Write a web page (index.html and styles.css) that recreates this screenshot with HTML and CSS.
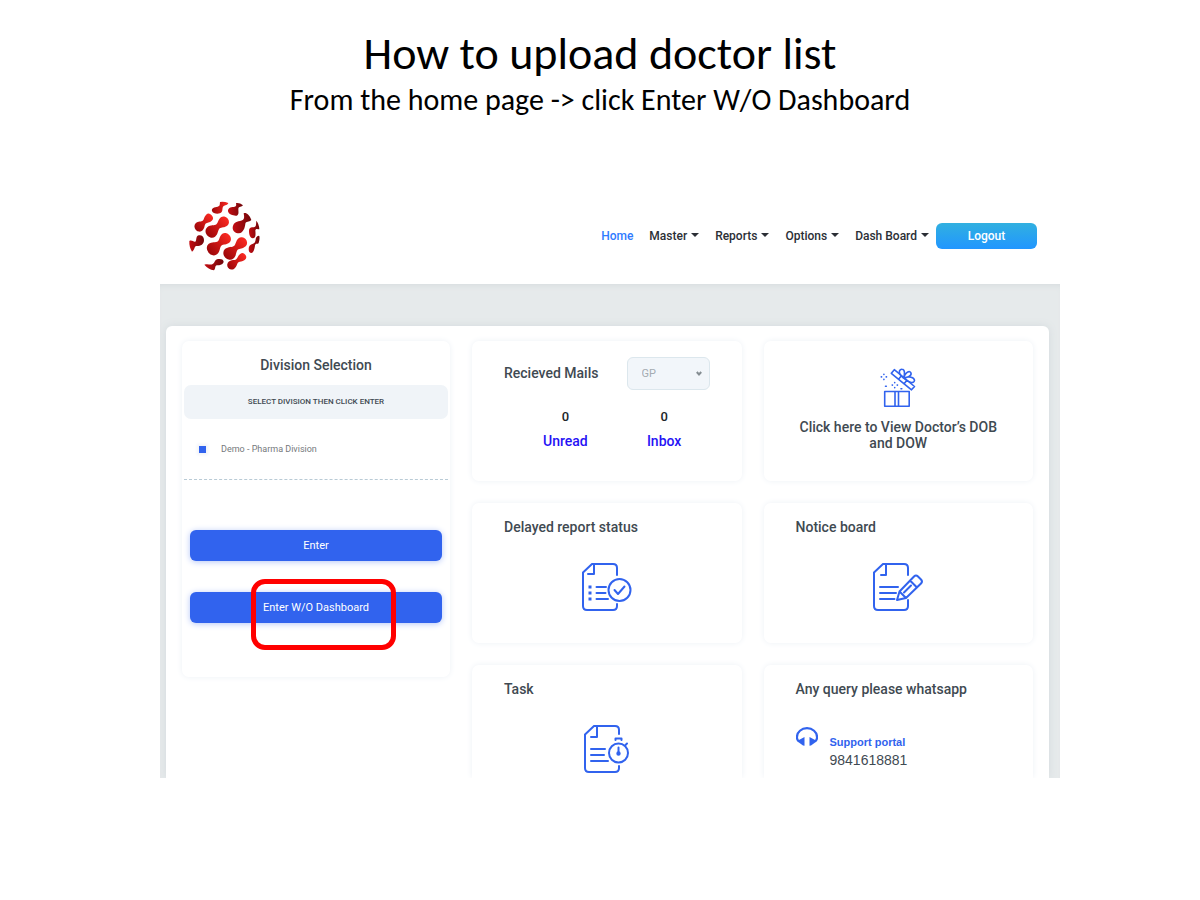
FILE: index.html
```html
<!DOCTYPE html>
<html lang="en">
<head>
<meta charset="utf-8">
<title>How to upload doctor list</title>
<link rel="stylesheet" href="styles.css">
</head>
<body>
<header class="slide-head">
  <h1>How to upload doctor list</h1>
  <p>From the home page -&gt; click Enter W/O Dashboard</p>
</header>
<div class="app">
  <header class="topbar">
    <svg class="logo" viewBox="24 30 222 216" aria-label="Logo" role="img">
      <defs>
        <linearGradient id="bright"><stop offset="0" stop-color="#9c0609"/><stop offset="1" stop-color="#fb2a22"/></linearGradient>
        <linearGradient id="deep"><stop offset="0" stop-color="#c40d12"/><stop offset="1" stop-color="#6f060a"/></linearGradient>
        <path id="bone" d="M-30-19C-14-19-8-8 2-8C10-8 16-16 30-16A16 16 0 0 1 30 16C16 16 10 8 2 8C-8 8-14 19-30 19A19 19 0 0 1-30-19Z"/>
      </defs>
      <g fill="url(#bright)">
        <use href="#bone" transform="translate(113 110) rotate(-39) scale(.84 .98)"/>
        <use href="#bone" transform="translate(118 161) rotate(-40) scale(.86 1.05)"/>
        <use href="#bone" transform="translate(167 174) rotate(-42) scale(.87 1)"/>
        <use href="#bone" transform="translate(72 97) rotate(-43) scale(.68 .78)"/>
        <use href="#bone" transform="translate(171 213) rotate(-37) scale(.68 .7)"/>
        <path d="M96 63C94 54 103 51 113 50C121 48 119 42 120 36Q132 34 145 39C143 46 135 45 130 49C126 53 129 60 125 66C119 74 99 72 96 63Z"/>
      </g>
      <g fill="url(#deep)">
        <path d="M158 113C159 100 167 95 180 93C195 91 193 82 191 70C198 67 208 73 214 90C207 97 198 93 196 101C195 113 190 128 177 130C166 130 158 123 158 113Z"/>
        <path d="M144 64C143 55 151 51 161 51C170 50 169 45 168 39Q179 37 189 46C185 52 177 49 175 56C175 66 178 73 170 77C161 78 146 74 144 64Z"/>
        <path d="M207 122C208 113 213 112 221 112C229 111 228 103 229 92Q237 101 238 118C233 118 228 115 226 121C227 132 228 145 218 145C210 143 207 134 207 122Z"/>
        <path d="M206 177C206 168 211 163 219 161C227 158 226 152 228 143Q233 136 238 138Q240 147 236 159C233 164 228 158 225 166C224 176 221 190 213 189C208 188 206 184 206 177Z"/>
        <path d="M28 153Q27 171 36 185C44 181 42 171 48 168C60 169 72 164 72 150C72 139 64 134 56 136C46 140 51 151 46 155C41 157 36 149 28 153Z"/>
        <path d="M73 224Q85 238 102 241C108 235 103 230 110 226C120 225 129 224 131 215C130 207 120 206 111 208C103 211 105 219 98 222C91 226 84 220 73 224Z"/>
      </g>
    </svg>
    <nav class="nav">
      <a class="active" href="#">Home</a>
      <a class="more" href="#">Master</a>
      <a class="more" href="#">Reports</a>
      <a class="more" href="#">Options</a>
      <a class="more" href="#">Dash Board</a>
    </nav>
    <button class="logout" type="button">Logout</button>
  </header>
  <main class="backdrop">
    <div class="panel">
      <form class="card division">
        <h2>Division Selection</h2>
        <p class="hint">SELECT DIVISION THEN CLICK ENTER</p>
        <label class="option"><input type="radio" name="division" checked>Demo - Pharma Division</label>
        <button class="primary" type="button">Enter</button>
        <div class="marked">
          <button class="primary" type="button">Enter W/O Dashboard</button>
          <span class="marker"></span>
        </div>
      </form>
      <div class="tiles">
        <section class="card mails">
          <div class="mail-head">
            <h2><label for="group">Recieved Mails</label></h2>
            <div class="picker">
              <select id="group"><option>GP</option></select>
              <svg viewBox="0 0 6 5"><path d="M.8 1L3 3.4L5.2 1"/></svg>
            </div>
          </div>
          <div class="counts">
            <div><span>0</span><a href="#">Unread</a></div>
            <div><span>0</span><a href="#">Inbox</a></div>
          </div>
        </section>
        <section class="card gift">
          <svg class="line-icon gift-icon" viewBox="0 0 36 40">
            <path d="M4.700 23.500h24.500v14.700h-24.500zM15 23.500v14.700M18.500 23.500v14.700"/>
            <path d="M14.300 1.700L34.500 18.500L31.500 21.800L11.300 5.300ZM21.500 7.700L18.500 11.200M27 12.200L24 15.800"/>
            <path d="M23.500 10C17 5 19.500 1 22 1.200C25 1.300 25 6 23.500 10C26 3 30 2.500 31 5C32 8 27 9.500 23.500 10C29 8 34.500 9 34.500 12.500C34 16 28 14.500 23.500 10"/>
            <path d="M3.900 6.200v.3M3.900 11.300v.3M1.300 8.900h.3M6.200 8.900h.3M14.700 14.500v.3M14.700 19.500v.3M12.200 17.100h.3M17.200 17.100h.3"/>
            <path d="M5.500 18.200h.8M21 20.800h.8"/>
          </svg>
          <h2>Click here to View Doctor’s DOB and DOW</h2>
        </section>
        <section class="card">
          <h2>Delayed report status</h2>
          <svg class="line-icon doc" viewBox="0 0 50 48">
            <path d="M10 1H31Q35 1 35 5V12M35 41V43Q35 47 31 47H5Q1 47 1 43V9.500L10 1M12 1V11H6"/>
            <path d="M14.500 24H24M14.500 30H23.500M14.500 36H26"/>
            <path stroke-linecap="butt" stroke-width="3" d="M6.500 24h3M6.500 30h3M6.500 36h3"/>
            <circle cx="37.500" cy="27" r="11"/><path d="M32.500 27L36 31L42.500 23.500"/>
          </svg>
        </section>
        <section class="card">
          <h2>Notice board</h2>
          <svg class="line-icon doc" viewBox="0 0 50 48">
            <path d="M10 1H31Q35 1 35 5V12M35 37V43Q35 47 31 47H5Q1 47 1 43V9.500L10 1M13 1V12H8"/>
            <path d="M7 24H25M7 30H23M7 36H21.500"/>
            <path d="M24 37L26.500 28.500L41 13.500Q43 11.500 45 13.500L48 16.500Q50 18.500 48 20.500L33 35ZM26.500 28.500L33 35M37 17.500L44 24.500M31 29.500L38 22.500"/>
          </svg>
        </section>
        <section class="card cut">
          <h2>Task</h2>
          <svg class="line-icon doc" viewBox="0 0 50 48">
            <path d="M12 1H33Q37 1 37 5V9M37 41V43Q37 47 33 47H7Q3 47 3 43V9.500L12 1M15 1V12H9"/>
            <path d="M9 24H23M9 30H22M9 36H26"/>
            <circle cx="36.500" cy="28" r="9.500"/>
            <path d="M33.500 15V13.500H39.500V15M43.500 20L45 18.500M36.500 22.500V28"/>
            <circle class="solid" cx="36.500" cy="28.500" r="1.200"/>
          </svg>
        </section>
        <section class="card cut">
          <h2>Any query please whatsapp</h2>
          <div class="support">
            <svg viewBox="0 0 22 20"><path class="band" d="M3 14.500C.5 12.500 1 10.500 1 10C1 5 5.500 1.200 11 1.200S21 5 21 10C21 10.500 21.500 12.500 19 14.500"/><path class="ear" d="M8.500 10V18.800L7 18.500L1.500 14.500L2 13.500ZM13.500 10V18.800L15 18.500L20.500 14.500L20 13.500Z"/></svg>
            <div><a href="#">Support portal</a><span>9841618881</span></div>
          </div>
        </section>
      </div>
    </div>
  </main>
</div>
</body>
</html>
```
FILE: styles.css
```css
* { box-sizing: border-box; }
body { margin: 0; background: #fff; font-family: Roboto, sans-serif; color: #212529; }
h1, h2, p { margin: 0; }
a { text-decoration: none; }

.slide-head { padding-top: 27px; text-align: center; font-family: Carlito, Calibri, "Open Sans", sans-serif; color: #000; }
.slide-head h1 { font-size: 46px; line-height: 53px; font-weight: 400; }
.slide-head p { font-size: 30px; line-height: 40px; }

.app { margin: 68px 140px 0 160px; overflow: hidden; }
.topbar { display: flex; align-items: center; height: 96px; padding: 0 23px 0 28px; }
.logo { width: 74px; height: 72px; }
.nav { display: flex; gap: 16px; margin-left: auto; font-size: 12px; line-height: 16px; font-weight: 500; }
.nav a { color: #2b2f36; white-space: nowrap; }
.nav .active { color: #2f7bff; }
.more::after { content: ""; display: inline-block; margin-left: 4px; vertical-align: 3px; border: 4px solid transparent; border-top-color: currentColor; border-bottom: 0; }
.logout { width: 101px; height: 26px; margin-left: 7px; border: 0; border-radius: 6px; background: linear-gradient(#31b0e0, #2196ff); color: #fff; font: 500 12px Roboto, sans-serif; }

.backdrop { padding: 42px 11px 0 6px; background: #e6eaeb; box-shadow: inset 0 5px 6px -4px #d5dadd; }
.panel { display: grid; grid-template-columns: minmax(0, 268fr) minmax(0, 561fr); column-gap: 22px; align-items: start; padding: 15px 16px 0; border-radius: 6px 6px 0 0; background: #fff; box-shadow: 0 0 8px #d4dade; }
.tiles { display: grid; grid-template-columns: 1fr 1fr; gap: 22px; }
.card { min-height: 140px; padding: 16px 32px 0; border-radius: 7px; background: #fff; box-shadow: 0 0 6px #edf1f6; }
.card h2 { color: #3f4a52; font-size: 14px; line-height: 16px; font-weight: 500; }
.cut { min-height: 113px; border-radius: 7px 7px 0 0; padding-bottom: 5px; }

.division { padding: 16px 2px 54px; }
.division h2 { text-align: center; }
.hint { margin-top: 12px; border-radius: 7px; background: #f0f4f8; color: #3f4a52; text-align: center; font-size: 8px; line-height: 34px; font-weight: 500; }
.option { display: flex; align-items: center; gap: 15px; height: 61px; padding-left: 15px; border-bottom: 1px dashed #b9cbd6; color: #75797c; font-size: 9px; }
.option input { appearance: none; width: 7px; height: 7px; margin: 0; background: #3163ee; box-shadow: 0 0 3px 2px #f1f3f8; }
.primary { display: block; width: calc(100% - 12px); height: 31px; margin: 50px 6px 0; border: 0; border-radius: 6px; background: #3163ee; box-shadow: 0 1px 6px #b5c7f7; color: #fff; font: 400 11px Roboto, sans-serif; }
.marked { position: relative; margin-top: 31px; }
.marked .primary { margin-top: 0; }
.marker { position: absolute; left: 67px; top: -13px; width: 145px; height: 71px; border: 5px solid #f00; border-radius: 14px; pointer-events: none; }

.mail-head { display: flex; justify-content: space-between; align-items: center; }
.mails h2 { margin-bottom: 2px; }
.picker { position: relative; width: 83px; }
.picker select { appearance: none; display: block; width: 100%; height: 33px; padding: 0 14px; border: 1px solid #dce7ed; border-radius: 6px; background: #f2f6fa; color: #a5acb2; font: 400 11px Roboto, sans-serif; }
.picker svg { position: absolute; right: 8px; top: 14px; width: 6px; height: 5px; fill: none; stroke: #858d92; stroke-width: 2; pointer-events: none; }
.counts { display: flex; gap: 4px; margin-top: 19px; padding-left: 12px; text-align: center; }
.mails { padding-right: 32px; }
.counts div { flex: 1; padding-left: 4px; }
.counts span, .counts a { display: block; line-height: 16px; font-weight: 500; }
.counts span { font-size: 13px; }
.counts a { margin-top: 8px; color: #2612f5; font-size: 14px; }

.line-icon { display: block; margin: 28px auto 0; fill: none; stroke: #3163ee; stroke-width: 2; stroke-linecap: round; stroke-linejoin: round; }
.doc { width: 50px; height: 48px; }
.solid { fill: #3163ee; }
.gift { padding-top: 27px; text-align: center; }
.gift-icon { width: 36px; height: 40px; margin: 0 auto 11px; stroke-width: 1.600; }
.support { display: flex; gap: 12px; margin-top: 30px; }
.support svg { width: 22px; height: 20px; }
.support div { padding-top: 6px; font-family: "Liberation Sans", Arial, sans-serif; }
.support a, .support span { display: block; line-height: 18px; }
.support a { color: #3163ee; font-size: 11px; font-weight: 700; }
.support span { color: #3f4a52; font-size: 14px; }
.band { fill: none; stroke: #3163ee; stroke-width: 2.200; }
.ear { fill: #3163ee; }
```
